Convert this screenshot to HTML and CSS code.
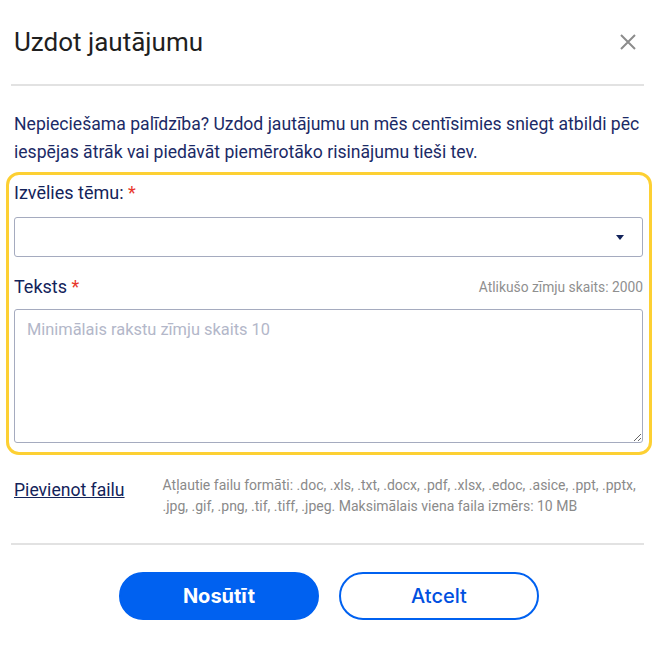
FILE: index.html
```html
<!DOCTYPE html>
<html lang="lv">
<head>
    <meta charset="UTF-8">
    <meta name="viewport" content="width=device-width, initial-scale=1.0">
    <title>Uzdot jautājumu</title>
    <link rel="stylesheet" href="styles.css">
</head>
<body>

<div class="dialog">
    <div class="dialog-header">
        <h1>Uzdot jautājumu</h1>
        <button class="close-btn" aria-label="Aizvērt">
            <svg width="18" height="18" viewBox="0 0 18 18">
                <path d="M2 2 L16 16 M16 2 L2 16" stroke="#8c8c8c" stroke-width="2" fill="none"/>
            </svg>
        </button>
    </div>

    <p class="intro">Nepieciešama palīdzība? Uzdod jautājumu un mēs centīsimies sniegt atbildi pēc iespējas ātrāk vai piedāvāt piemērotāko risinājumu tieši tev.</p>

    <div class="form-box">
        <label class="field-label" for="topic">Izvēlies tēmu: <span class="req">*</span></label>
        <div class="select-wrap">
            <select id="topic">
                <option value=""></option>
            </select>
            <span class="select-arrow"></span>
        </div>

        <div class="text-head">
            <label class="field-label" for="message">Teksts <span class="req">*</span></label>
            <span class="counter">Atlikušo zīmju skaits: 2000</span>
        </div>
        <textarea id="message" placeholder="Minimālais rakstu zīmju skaits 10"></textarea>
    </div>

    <div class="attach-row">
        <a href="#" class="attach-link">Pievienot failu</a>
        <div class="attach-info">Atļautie failu formāti: .doc, .xls, .txt, .docx, .pdf, .xlsx, .edoc, .asice, .ppt, .pptx, .jpg, .gif, .png, .tif, .tiff, .jpeg. Maksimālais viena faila izmērs: 10 MB</div>
    </div>

    <div class="dialog-footer">
        <button class="btn btn-primary">Nosūtīt</button>
        <button class="btn btn-outline">Atcelt</button>
    </div>
</div>

</body>
</html>
```

FILE: styles.css
```css
body {
    margin: 0;
    font-family: Roboto, "Liberation Sans", sans-serif;
    background: #fff;
    color: #13235a;
}

.dialog {
    width: 630px;
    padding: 0 15px 0 14px;
}

.dialog-header {
    display: flex;
    justify-content: space-between;
    align-items: center;
    height: 84px;
    border-bottom: 2px solid #e2e2e2;
    margin-left: -3px;
    padding-left: 3px;
}

.dialog-header h1 {
    margin: 0;
    font-size: 26px;
    font-weight: 400;
    color: #1f1f1f;
}

.close-btn {
    background: none;
    border: none;
    padding: 0;
    margin-right: 7px;
    cursor: pointer;
    display: flex;
}

.intro {
    margin: 24px 0 6px;
    font-size: 17.6px;
    line-height: 28px;
    color: #1b2a66;
}

.form-box {
    margin: 0 -8px;
    border: 3px solid #fdd033;
    border-radius: 13px;
    padding: 6px 6px 9px 5px;
}

.field-label {
    display: block;
    font-size: 18px;
    line-height: 24px;
    color: #13235a;
}

.req {
    color: #e8372c;
}

.select-wrap {
    position: relative;
    margin-top: 12px;
}

.select-wrap select {
    width: 100%;
    height: 40px;
    border: 1px solid #a5abbf;
    border-radius: 3px;
    background: #fff;
    appearance: none;
    font-family: inherit;
    font-size: 16px;
}

.select-arrow {
    position: absolute;
    right: 19px;
    top: 18px;
    width: 0;
    height: 0;
    border-left: 4px solid transparent;
    border-right: 4px solid transparent;
    border-top: 5px solid #13235a;
}

.text-head {
    display: flex;
    justify-content: space-between;
    align-items: center;
    margin-top: 18px;
}

.counter {
    font-size: 13.8px;
    color: #8f8f8f;
}

textarea {
    display: block;
    box-sizing: border-box;
    width: 100%;
    height: 134px;
    margin-top: 10px;
    border: 1px solid #a5abbf;
    border-radius: 3px;
    padding: 10px 12px;
    font-family: inherit;
    font-size: 16.4px;
    color: #13235a;
}

textarea::placeholder {
    color: #b3b7c9;
}

.attach-row {
    display: flex;
    gap: 38px;
    padding: 24px 0 26px;
    border-bottom: 2px solid #e2e2e2;
    margin-left: -3px;
    padding-left: 3px;
}

.attach-link {
    font-size: 17.6px;
    color: #13235a;
    line-height: 22px;
    white-space: nowrap;
}

.attach-info {
    font-size: 14px;
    line-height: 21px;
    color: #8a8a8a;
    margin-top: -4px;
}

.dialog-footer {
    display: flex;
    justify-content: center;
    gap: 20px;
    padding-top: 27px;
}

.btn {
    width: 200px;
    height: 48px;
    border-radius: 24px;
    font-family: Inter, Roboto, sans-serif;
    font-size: 20px;
    cursor: pointer;
}

.btn-primary {
    background: #0061f0;
    border: 2px solid #0061f0;
    color: #fff;
    font-weight: 700;
}

.btn-outline {
    background: #fff;
    border: 2px solid #0061f0;
    color: #0050e0;
    font-weight: 500;
}
```
